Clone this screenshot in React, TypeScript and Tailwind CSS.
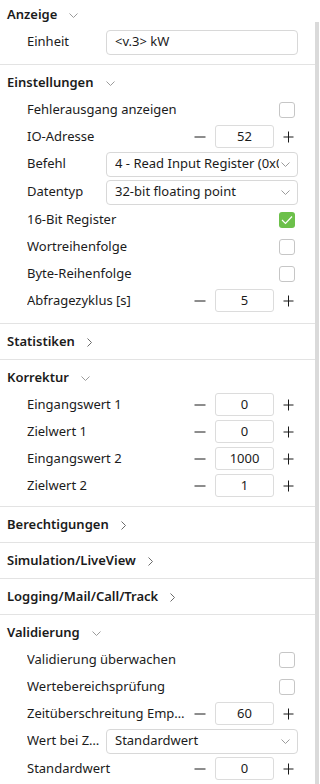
import React from 'react';

type Row =
  | { kind: 'check'; label: string; checked?: boolean }
  | { kind: 'number'; label: string; value: string }
  | { kind: 'select'; label: string; value: string }
  | { kind: 'text'; label: string; value: string };

type Section = { title: string; open: boolean; pb?: string; rows?: Row[] };

const sections: Section[] = [
  { title: 'Anzeige', open: true, pb: 'pb-[8px]', rows: [{ kind: 'text', label: 'Einheit', value: '<v.3> kW' }] },
  {
    title: 'Einstellungen',
    open: true,
    pb: 'pb-[9px]',
    rows: [
      { kind: 'check', label: 'Fehlerausgang anzeigen' },
      { kind: 'number', label: 'IO-Adresse', value: '52' },
      { kind: 'select', label: 'Befehl', value: '4 - Read Input Register (0x04)' },
      { kind: 'select', label: 'Datentyp', value: '32-bit floating point' },
      { kind: 'check', label: '16-Bit Register', checked: true },
      { kind: 'check', label: 'Wortreihenfolge' },
      { kind: 'check', label: 'Byte-Reihenfolge' },
      { kind: 'number', label: 'Abfragezyklus [s]', value: '5' },
    ],
  },
  { title: 'Statistiken', open: false },
  {
    title: 'Korrektur',
    open: true,
    pb: 'pb-[7px]',
    rows: [
      { kind: 'number', label: 'Eingangswert 1', value: '0' },
      { kind: 'number', label: 'Zielwert 1', value: '0' },
      { kind: 'number', label: 'Eingangswert 2', value: '1000' },
      { kind: 'number', label: 'Zielwert 2', value: '1' },
    ],
  },
  { title: 'Berechtigungen', open: false },
  { title: 'Simulation/LiveView', open: false },
  { title: 'Logging/Mail/Call/Track', open: false },
  {
    title: 'Validierung',
    open: true,
    pb: 'pb-[7px]',
    rows: [
      { kind: 'check', label: 'Validierung überwachen' },
      { kind: 'check', label: 'Wertebereichsprüfung' },
      { kind: 'number', label: 'Zeitüberschreitung Empfang [s]', value: '60' },
      { kind: 'select', label: 'Wert bei Zeitüberschreitung', value: 'Standardwert' },
      { kind: 'number', label: 'Standardwert', value: '0' },
    ],
  },
];

function ChevronDown() {
  return (
    <svg width="9" height="5" viewBox="0 0 9 5" fill="none">
      <path d="M0.5 0.5 L4.5 4.5 L8.5 0.5" stroke="#9b9b9b" strokeWidth="1" />
    </svg>
  );
}

function ChevronRight() {
  return (
    <svg width="5" height="9" viewBox="0 0 5 9" fill="none">
      <path d="M0.5 0.5 L4.5 4.5 L0.5 8.5" stroke="#6b6b6b" strokeWidth="1" />
    </svg>
  );
}

function Checkbox({ checked }: { checked?: boolean }) {
  if (checked) {
    return (
      <span className="mr-[3px] flex h-4 w-4 items-center justify-center rounded-[3px] bg-[#6cc04a]">
        <svg width="12" height="10" viewBox="0 0 12 10" fill="none">
          <path d="M1 5 L4.5 8.5 L11 1.5" stroke="#ffffff" strokeWidth="1.2" />
        </svg>
      </span>
    );
  }
  return <span className="mr-[3px] h-4 w-4 rounded-[3px] border border-[#c6c6c6] bg-white" />;
}

function NumberBox({ value }: { value: string }) {
  return (
    <div className="mr-[4px] flex items-center">
      <svg width="12" height="12" viewBox="0 0 12 12">
        <path d="M0.5 6 H11.5" stroke="#1a1a1a" strokeWidth="1" />
      </svg>
      <div className="mx-[9px] flex h-[23px] w-[59px] items-center justify-center rounded-[3px] border border-[#dcdcdc] bg-white text-[13px]">
        {value}
      </div>
      <svg width="11" height="12" viewBox="0 0 11 12">
        <path d="M0.5 6 H10.5 M5.5 0.5 V11.5" stroke="#1a1a1a" strokeWidth="1" />
      </svg>
    </div>
  );
}

function FieldRow({ row }: { row: Row }) {
  if (row.kind === 'select' || row.kind === 'text') {
    return (
      <div className="flex h-[28px] items-center pl-[27px] pr-[17px]">
        <span className="w-[79px] shrink-0 truncate pr-[3px]">{row.label}</span>
        <div className="flex h-[25px] w-[192px] items-center overflow-hidden rounded-[4px] border border-[#d8d8d8] bg-white pl-[8px]">
          <span className="flex-1 overflow-hidden whitespace-nowrap">{row.value}</span>
          {row.kind === 'select' && (
            <span className="flex w-[18px] shrink-0 items-center justify-start pl-[2px]">
              <ChevronDown />
            </span>
          )}
        </div>
      </div>
    );
  }
  return (
    <div className="flex h-[27px] items-center pl-[27px] pr-[17px]">
      <span className="min-w-0 flex-1 truncate pr-[8px]">{row.label}</span>
      {row.kind === 'check' ? <Checkbox checked={row.checked} /> : <NumberBox value={row.value} />}
    </div>
  );
}

function SectionBlock({ s }: { s: Section }) {
  return (
    <div className="border-b border-[#e3e3e3]">
      {s.open ? (
        <>
          <div className="flex h-[31px] items-center gap-[12px] pl-[7px] pt-[5px]">
            <span className="font-semibold">{s.title}</span>
            <ChevronDown />
          </div>
          <div className={s.pb}>
            {s.rows!.map((r) => (
              <FieldRow key={r.label} row={r} />
            ))}
          </div>
        </>
      ) : (
        <div className="flex h-[35px] items-center gap-[12px] pl-[7px] pt-[1px]">
          <span className="font-semibold">{s.title}</span>
          <ChevronRight />
        </div>
      )}
    </div>
  );
}

export default function App() {
  return (
    <div
      className="flex h-[784px] w-[320px] overflow-hidden bg-white text-[13px] text-[#1b1b1b]"
      style={{ fontFamily: '"Noto Sans", "Open Sans", sans-serif' }}
    >
      <div className="-mt-[3px] w-[315px] shrink-0">
        {sections.map((s) => (
          <SectionBlock key={s.title} s={s} />
        ))}
      </div>
      <div className="flex-1 pt-[22px]">
        <div className="h-full w-[4px] bg-[#dadada]" />
      </div>
    </div>
  );
}
